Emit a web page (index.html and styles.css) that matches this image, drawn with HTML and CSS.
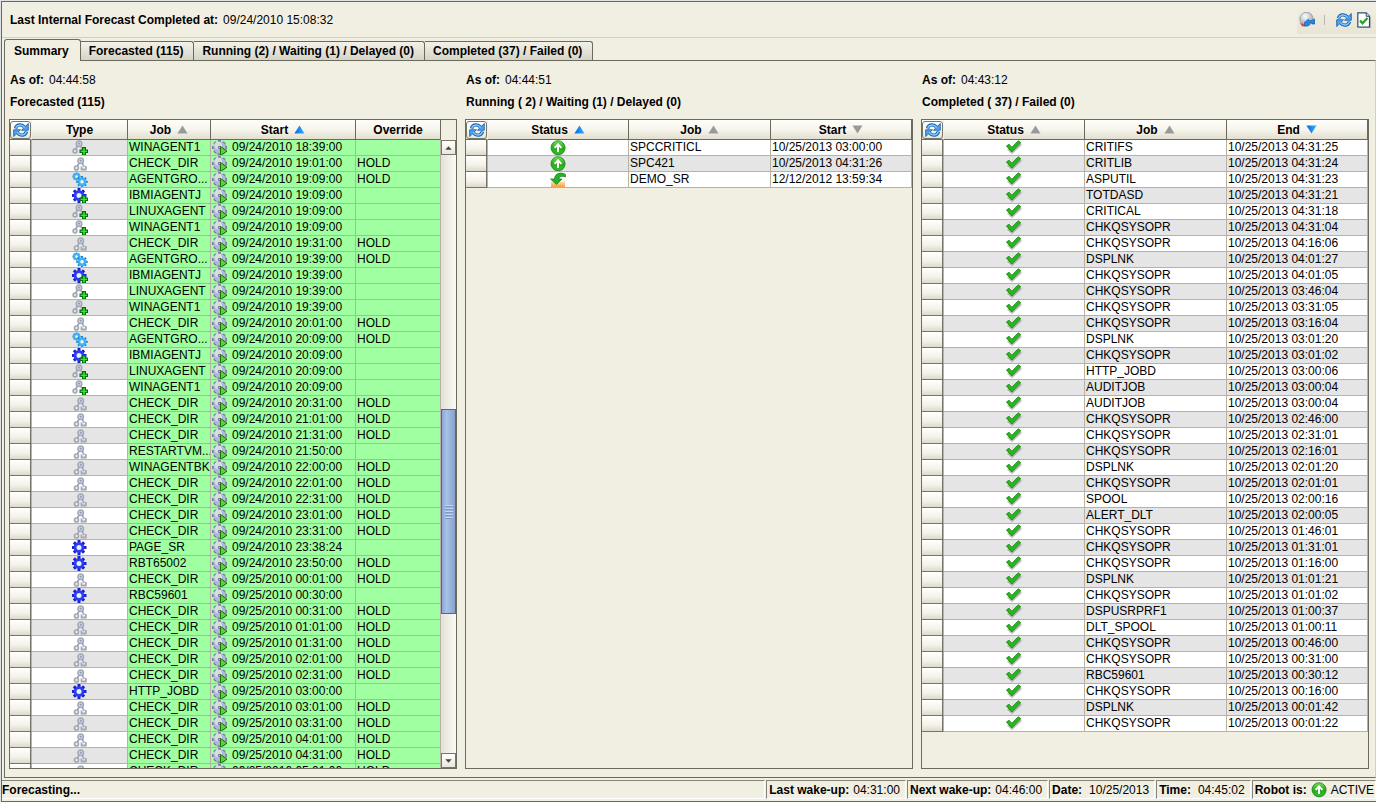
FILE: index.html
```html
<!DOCTYPE html>
<html lang="en">
<head>
<meta charset="utf-8">
<title>Schedule Activity Monitor</title>
<link rel="stylesheet" href="styles.css">
</head>
<body>
<svg class="sprite" aria-hidden="true">
  <defs>
    <linearGradient id="gr-ball" x1="0" y1="0" x2="0" y2="1"><stop offset="0" stop-color="#7be05a"/><stop offset=".5" stop-color="#27a81c"/><stop offset="1" stop-color="#35c32a"/></linearGradient>
    <linearGradient id="gr-tri" x1="0" y1="0" x2="1" y2="0"><stop offset="0" stop-color="#0a62d8"/><stop offset="1" stop-color="#35b6ff"/></linearGradient>
    <linearGradient id="gr-tray" x1="0" y1="0" x2="0" y2="1"><stop offset="0" stop-color="#ffe0a8"/><stop offset="1" stop-color="#ff9d3c"/></linearGradient>
    <radialGradient id="gr-globe" cx=".4" cy=".3" r=".8"><stop offset="0" stop-color="#fff"/><stop offset="1" stop-color="#8d9195"/></radialGradient>
  </defs>
  <symbol id="agent" viewBox="0 0 16 16">
    <g fill="none" stroke="#a3a8b4"><path d="M7.500 6.500L5 10.500M10 6.500l2 4.500" stroke-width="1.800"/><circle cx="8.700" cy="4.700" r="2.700" fill="#dfe4ee" stroke-width="1.700"/><circle cx="4.500" cy="12" r="2" fill="#eef0f4" stroke-width="1.700"/><path d="M9.500 10.500V13.500h4.300v-3.500" stroke-width="1.800"/></g>
    <circle cx="8.700" cy="4.700" r="1.100" fill="#7f9cc8"/>
  </symbol>
  <symbol id="plus" viewBox="0 0 16 16"><path d="M10 7h4v2.500h2v3.500h-2v2.500h-4v-2.500H7.500v-3.500H10z" fill="#0b6c10"/><path d="M11.200 8.200h1.600v2.500H15v1.200h-2.200v2.500h-1.600v-2.500H8.700v-1.200h2.500z" fill="#27f02b"/></symbol>
  <symbol id="agent-plus" viewBox="0 0 16 16">
    <g fill="none" stroke="#a3a8b4"><path d="M5.500 6L3 10M8.500 6l2 3" stroke-width="1.800"/><circle cx="7" cy="3.700" r="2.700" fill="#dfe4ee" stroke-width="1.700"/><circle cx="3" cy="11" r="1.900" fill="#eef0f4" stroke-width="1.700"/></g>
    <circle cx="7" cy="3.700" r="1.100" fill="#7f9cc8"/><use href="#plus"/>
  </symbol>
  <symbol id="gear" viewBox="0 0 16 16">
    <g fill="none" stroke="#1b23c9" stroke-width="3"><path d="M7 0v15M-.5 7.500h15M1.900 2.400l10.200 10.200M12.100 2.400L1.900 12.600"/></g>
    <circle cx="7" cy="7.500" r="5.300" fill="#2a3ff2"/><circle cx="7" cy="7.500" r="2.500" fill="#eceefa"/>
  </symbol>
  <symbol id="gear-plus" viewBox="0 0 16 16"><use href="#gear"/><use href="#plus"/></symbol>
  <symbol id="group" viewBox="0 0 16 16">
    <g fill="none" stroke="#1787cf" stroke-width="1.800"><path d="M4.500 .5v8M.5 4.500h8M1.700 1.700l5.600 5.600M7.300 1.700L1.700 7.300"/></g>
    <circle cx="4.500" cy="4.500" r="3.200" fill="#40b1f4"/><circle cx="4.500" cy="4.500" r="1.200" fill="#fff"/>
    <g fill="none" stroke="#1787cf" stroke-width="2.200"><path d="M10 4v11.500M4.300 9.800h11.400M6 5.800l8 8M14 5.800l-8 8"/></g>
    <circle cx="10" cy="9.800" r="4.400" fill="#40b1f4"/><circle cx="10" cy="9.800" r="1.700" fill="#fff"/>
  </symbol>
  <symbol id="run" viewBox="0 0 16 16">
    <circle cx="8.300" cy="8.500" r="6.800" fill="#555" opacity=".35"/>
    <g fill="none" stroke="#7c7f9c" stroke-width="3"><path d="M7.500 0v15M0 7.500h15M2.300 2.300l10.400 10.400M12.700 2.300L2.300 12.700"/></g>
    <circle cx="7.500" cy="7.500" r="6" fill="#b4b6d6"/><circle cx="6.300" cy="5.500" r="3.800" fill="#d9dbf0"/><circle cx="7.500" cy="7.500" r="1.700" fill="#6a6e88"/><circle cx="7.500" cy="7.500" r=".8" fill="#a0ffa0"/>
    <path d="M8.500 6.500l6.500 4.700-6.500 4.300z" fill="#5fd03f" stroke="#14710f" stroke-width="1"/>
  </symbol>
  <symbol id="up" viewBox="0 0 16 16">
    <circle cx="8.500" cy="8.500" r="7" fill="#888" opacity=".5"/><circle cx="8" cy="7.700" r="7" fill="url(#gr-ball)" stroke="#168512" stroke-width=".8"/>
    <path d="M8 3l4.200 4.300-1.400 1.200L9 6.800V12H7V6.800L5.200 8.500 3.800 7.300z" fill="#fff"/>
  </symbol>
  <symbol id="wait" viewBox="0 0 16 16">
    <path d="M1 9.500h14V15H1z" fill="url(#gr-tray)"/>
    <path d="M15.500 2.500V5C12 3.500 9 4.500 9 7h3l-5.500 5.500L.5 7h4C4.500 1.500 11 -.5 15.500 2.500z" fill="#27b12c" stroke="#128018" stroke-width=".7"/>
  </symbol>
  <symbol id="check" viewBox="0 0 16 16">
    <path d="M2 8.500L6 12.500 15 4" fill="none" stroke="#777" stroke-width="2.500" opacity=".5"/>
    <path d="M.4 6L3 4.200l2.800 3L12.300 .8l2.400 1.900L5.800 12z" fill="#2bb51f" stroke="#14850f" stroke-width=".8"/>
  </symbol>
  <symbol id="sync" viewBox="0 0 16 16">
    <g fill="none" stroke="#1d66b4" stroke-width="3.400"><path d="M2.500 6.500C3.500 2.500 8.500 1.500 11.500 5"/><path d="M13.500 9.500c-1 4-6 5-9 1.500"/></g>
    <path d="M15.300 1.500v6.700H8.500z" fill="#4ba2f2" stroke="#1d66b4" stroke-width=".9"/><path d="M.7 14.500V7.800h6.800z" fill="#4ba2f2" stroke="#1d66b4" stroke-width=".9"/>
    <g fill="none" stroke="#84c3fa" stroke-width="1.600"><path d="M2.700 6C4 2.700 8.500 1.700 11.800 5.500"/><path d="M13.300 10c-1.300 3.300-5.800 4.300-9.100 .5"/></g>
  </symbol>
  <symbol id="globe" viewBox="0 0 16 16">
    <circle cx="7.500" cy="7" r="6.700" fill="url(#gr-globe)" stroke="#8d8f92" stroke-width=".7"/><path d="M.7 11l3.800 1 2 1.500-3 1.300z" fill="#f24a1b"/>
    <path d="M6.500 9.500l3-2.300v1.300h3L16 7v5h-3v-1.200h-2.500l-1 3-4 .5v-4z" fill="#2687e8" stroke="#0d55ae" stroke-width=".6"/>
  </symbol>
  <symbol id="doc" viewBox="0 0 16 16"><path d="M2.700 2h9l3 3.200V16h-12z" fill="#777" opacity=".6"/><path d="M1.800 .8h8.400L13.500 4.300v10.700H1.800z" fill="#fff" stroke="#2c4d78" stroke-width="1.200"/><path d="M10.200 .8v3.500h3.300" fill="#d5e3f1" stroke="#2c4d78"/><path d="M4 8.500l2.500 2.800L11.500 6" fill="none" stroke="#27a31f" stroke-width="2.300"/></symbol>
  <symbol id="tri-up" viewBox="0 0 12 10" preserveAspectRatio="none"><path d="M6 .5L11.500 9.500H.5z"/></symbol>
  <symbol id="tri-down" viewBox="0 0 12 10" preserveAspectRatio="none"><path d="M6 9.500L.5 .5h11z"/></symbol>
</svg>

<div class="app">
  <header class="toolbar">
    <p class="stamp"><b>Last Internal Forecast Completed at:</b><span>09/24/2010 15:08:32</span></p>
    <div class="tools">
      <button class="tool" aria-label="Remote refresh"><svg class="icon"><use href="#globe"/></svg></button>
      <span class="tool-sep"></span>
      <button class="tool" aria-label="Refresh"><svg class="icon"><use href="#sync"/></svg></button>
      <button class="tool" aria-label="Properties"><svg class="icon"><use href="#doc"/></svg></button>
    </div>
  </header>

  <nav class="tabs" role="tablist">
    <button class="tab tab-active" role="tab" aria-selected="true">Summary</button>
    <button class="tab" role="tab">Forecasted (115)</button>
    <button class="tab" role="tab">Running (2) / Waiting (1) / Delayed (0)</button>
    <button class="tab" role="tab">Completed (37) / Failed (0)</button>
  </nav>

  <main class="pane">
    <section class="panel">
      <p class="stamp"><b>As of:</b><span>04:44:58</span></p>
      <h2 class="title">Forecasted (115)</h2>
      <div class="box">
        <table class="grid grid-forecast">
          <colgroup><col class="c-handle"><col class="c-type"><col class="c-name"><col class="c-when"><col class="c-over"></colgroup>
          <thead><tr>
            <th class="corner"><button class="reload" aria-label="Refresh forecasted"><svg class="icon"><use href="#sync"/></svg></button></th>
            <th>Type</th>
            <th>Job<svg class="sort"><use href="#tri-up"/></svg></th>
            <th>Start<svg class="sort sort-on"><use href="#tri-up"/></svg></th>
            <th>Override</th>
          </tr></thead>
          <tbody id="forecast"></tbody>
        </table>
        <div class="scroll">
          <div class="scroll-head"></div>
          <button class="scroll-btn" aria-label="Scroll up"><svg class="arrow"><use href="#tri-up"/></svg></button>
          <div class="track"><div class="track-before"></div><div class="thumb"><span class="grip"></span></div><div class="track-after"></div></div>
          <button class="scroll-btn" aria-label="Scroll down"><svg class="arrow"><use href="#tri-down"/></svg></button>
        </div>
      </div>
    </section>

    <section class="panel">
      <p class="stamp"><b>As of:</b><span>04:44:51</span></p>
      <h2 class="title">Running ( 2) / Waiting (1) / Delayed (0)</h2>
      <div class="box">
        <table class="grid">
          <colgroup><col class="c-handle"><col class="c-third"><col class="c-job"><col class="c-third"></colgroup>
          <thead><tr>
            <th class="corner"><button class="reload" aria-label="Refresh running"><svg class="icon"><use href="#sync"/></svg></button></th>
            <th>Status<svg class="sort sort-on"><use href="#tri-up"/></svg></th>
            <th>Job<svg class="sort"><use href="#tri-up"/></svg></th>
            <th>Start<svg class="sort"><use href="#tri-down"/></svg></th>
          </tr></thead>
          <tbody id="running"></tbody>
        </table>
      </div>
    </section>

    <section class="panel">
      <p class="stamp"><b>As of:</b><span>04:43:12</span></p>
      <h2 class="title">Completed ( 37) / Failed (0)</h2>
      <div class="box">
        <table class="grid">
          <colgroup><col class="c-handle"><col class="c-third"><col class="c-job"><col class="c-third"></colgroup>
          <thead><tr>
            <th class="corner"><button class="reload" aria-label="Refresh completed"><svg class="icon"><use href="#sync"/></svg></button></th>
            <th>Status<svg class="sort"><use href="#tri-up"/></svg></th>
            <th>Job<svg class="sort"><use href="#tri-up"/></svg></th>
            <th>End<svg class="sort sort-on"><use href="#tri-down"/></svg></th>
          </tr></thead>
          <tbody id="completed"></tbody>
        </table>
      </div>
    </section>
  </main>

  <footer class="status">
    <div class="cell cell-message"><b>Forecasting...</b></div>
    <div class="cell"><b>Last wake-up:</b><span>04:31:00</span></div>
    <div class="cell"><b>Next wake-up:</b><span>04:46:00</span></div>
    <div class="cell cell-wide"><b>Date:</b><span>10/25/2013</span></div>
    <div class="cell cell-wide"><b>Time:</b><span>04:45:02</span></div>
    <div class="cell cell-robot"><b>Robot is:</b><svg class="icon"><use href="#up"/></svg><span>ACTIVE</span></div>
  </footer>
</div>
<script src="script.js"></script>
</body>
</html>
```

FILE: styles.css
```css
* { box-sizing: border-box; }

body {
  margin: 0;
  padding: 1px 0 0 1px;
  height: 100vh;
  overflow: hidden;
  background: #dfe3e6;
  color: #000;
  font: 12px/15px "Liberation Sans", Arial, sans-serif;
}

button {
  margin: 0;
  padding: 0;
  border: 0;
  background: none;
  color: inherit;
  font: inherit;
}

.sprite { position: absolute; width: 0; height: 0; }
.icon { display: block; width: 16px; height: 16px; flex: none; overflow: visible; }

.app {
  display: flex;
  flex-direction: column;
  height: 100%;
  border: 1px solid #686860;
  border-right: 0;
  background: #f1eee2;
}

/* Top bar */
.toolbar {
  display: flex;
  justify-content: space-between;
  align-items: center;
  height: 36px;
  padding-left: 8px;
  border-bottom: 1px solid #d2d0c3;
}
.stamp { display: flex; gap: 5px; margin: 0; white-space: nowrap; }
.toolbar .stamp { padding-top: 2px; }
.tools {
  display: flex;
  align-items: center;
  gap: 4px;
  height: 28px;
  padding: 0 4px 0 2px;
  background: linear-gradient(#f1eee2, #e8e5d6);
}
.tool-sep { width: 1px; height: 10px; margin: 0 7px 0 5px; background: #b9b7ab; }

/* Tabs */
.tabs { display: flex; align-items: flex-end; height: 22px; padding-left: 2px; }
.tab {
  height: 19px;
  padding: 1px 10px 0 8px;
  border: 1px solid #6b6a5e;
  border-left: 0;
  border-bottom: 0;
  border-radius: 0 3px 0 0;
  background: linear-gradient(#f4f2e8, #d6d4c6);
  font-weight: bold;
  white-space: nowrap;
}
.tab-active {
  position: relative;
  height: 22px;
  margin-bottom: -1px;
  padding: 1px 11px 0 9px;
  border-left: 1px solid #6b6a5e;
  border-radius: 3px 3px 0 0;
  background: #f1eee2;
}

/* Summary pane */
.pane {
  flex: 1;
  min-height: 0;
  display: grid;
  grid-template-columns: repeat(3, minmax(0, 1fr));
  gap: 8px;
  margin-left: 2px;
  padding: 12px 6px 8px 4px;
  border: 1px solid #6b6a5e;
  border-right-color: #d2d0c3;
}
.panel { display: flex; flex-direction: column; min-height: 0; }
.panel .stamp { padding-left: 1px; }
.title { margin: 7px 0 9px 1px; font: inherit; font-weight: bold; }
.box {
  flex: 1;
  display: flex;
  align-items: flex-start;
  min-height: 0;
  overflow: hidden;
  border: 1px solid #6b6a5e;
}

.grid { flex: 1; width: 100%; table-layout: fixed; border-spacing: 0; }
.c-handle { width: 22px; }
.c-type { width: 96px; }
.c-name { width: 83px; }
.c-when { width: 145px; }
.c-over { width: 85px; }
.c-third { width: 141px; }
.c-job { width: 142px; }

.grid th {
  height: 20px;
  padding: 2px 0 0;
  border-right: 1px solid #6b6a5e;
  border-bottom: 1px solid #6b6a5e;
  background: linear-gradient(#fefefb, #f7f5ec 50%, #e2dfd0);
  line-height: 17px;
}
.grid th.corner { padding: 0; border-right-color: #f1eee2; }
.reload {
  display: flex;
  align-items: center;
  justify-content: center;
  width: 21px;
  height: 18px;
  border: 1px solid #77766a;
  border-radius: 3px;
  background: linear-gradient(#fff, #e9e7da);
}
.sort { width: 11px; height: 9px; margin-left: 6px; fill: #999; }
.sort-on { fill: url(#gr-tri); }

.grid td {
  height: 16px;
  padding: 0 0 0 1px;
  border-right: 1px solid #b5b2a7;
  border-bottom: 1px solid #b5b2a7;
  background: #fff;
  line-height: 15px;
  white-space: nowrap;
  overflow: hidden;
}
.grid tr:nth-child(even) td { background: #e5e5e5; }
.grid-forecast tr:nth-child(odd) td { background: #e5e5e5; }
.grid-forecast tr:nth-child(even) td { background: #fff; }
.grid-forecast tr td.hot { background: #a0ffa0; }
.grid tr td.handle {
  border-bottom-color: #77766a;
  background: linear-gradient(#fffffc, #f4f2e9 60%, #dcd9cc);
  box-shadow: inset -1px 0 #77766a;
}
.grid td .icon { margin-bottom: -1px; }
.grid .mark { padding: 0; }
.mark .icon { margin-left: auto; margin-right: auto; }
.when { display: flex; gap: 4px; height: 15px; }

/* Scroll bar */
.scroll { display: flex; flex-direction: column; align-self: stretch; width: 15px; }
.scroll-head { height: 20px; }
.scroll-btn {
  display: flex;
  align-items: center;
  justify-content: center;
  height: 15px;
  border: 1px solid #77766a;
  background: linear-gradient(#fff, #e9e7da);
}
.arrow { width: 7px; height: 4px; fill: #444; }
.track { flex: 1; display: flex; flex-direction: column; background: linear-gradient(90deg, #e4e1d6, #fbfaf5); }
.track-before { flex: 255; }
.thumb {
  flex: 204;
  display: flex;
  align-items: center;
  justify-content: center;
  border: 1px solid #52688c;
  background: linear-gradient(90deg, #88a6d6, #a9c1e6 35%, #86a2cd);
}
.track-after { flex: 139; }
.grip { width: 8px; height: 14px; background: repeating-linear-gradient(#c4d5ef 0 1px, #7f99c2 1px 2px, #9bb4db 2px 3px); }

/* Status bar */
.status { display: flex; gap: 1px; height: 23px; padding: 2px 0; }
.cell {
  display: flex;
  align-items: center;
  gap: 4px;
  padding: 1px 5px 0 2px;
  border: 1px solid #85847a;
  border-right-color: #fff;
  border-bottom-color: #fff;
  white-space: nowrap;
}
.cell-message { flex: 1; padding-left: 0; border-left: 0; }
.cell-wide { gap: 7px; }
.cell-robot { padding-right: 1px; }
```

FILE: script.js
```js
const forecast = [
  ["agent-plus", "WINAGENT1", "09/24/2010 18:39:00", ""],
  ["agent", "CHECK_DIR", "09/24/2010 19:01:00", "HOLD"],
  ["group", "AGENTGRO...", "09/24/2010 19:09:00", "HOLD"],
  ["gear-plus", "IBMIAGENTJ", "09/24/2010 19:09:00", ""],
  ["agent-plus", "LINUXAGENT", "09/24/2010 19:09:00", ""],
  ["agent-plus", "WINAGENT1", "09/24/2010 19:09:00", ""],
  ["agent", "CHECK_DIR", "09/24/2010 19:31:00", "HOLD"],
  ["group", "AGENTGRO...", "09/24/2010 19:39:00", "HOLD"],
  ["gear-plus", "IBMIAGENTJ", "09/24/2010 19:39:00", ""],
  ["agent-plus", "LINUXAGENT", "09/24/2010 19:39:00", ""],
  ["agent-plus", "WINAGENT1", "09/24/2010 19:39:00", ""],
  ["agent", "CHECK_DIR", "09/24/2010 20:01:00", "HOLD"],
  ["group", "AGENTGRO...", "09/24/2010 20:09:00", "HOLD"],
  ["gear-plus", "IBMIAGENTJ", "09/24/2010 20:09:00", ""],
  ["agent-plus", "LINUXAGENT", "09/24/2010 20:09:00", ""],
  ["agent-plus", "WINAGENT1", "09/24/2010 20:09:00", ""],
  ["agent", "CHECK_DIR", "09/24/2010 20:31:00", "HOLD"],
  ["agent", "CHECK_DIR", "09/24/2010 21:01:00", "HOLD"],
  ["agent", "CHECK_DIR", "09/24/2010 21:31:00", "HOLD"],
  ["agent", "RESTARTVM...", "09/24/2010 21:50:00", ""],
  ["agent", "WINAGENTBK", "09/24/2010 22:00:00", "HOLD"],
  ["agent", "CHECK_DIR", "09/24/2010 22:01:00", "HOLD"],
  ["agent", "CHECK_DIR", "09/24/2010 22:31:00", "HOLD"],
  ["agent", "CHECK_DIR", "09/24/2010 23:01:00", "HOLD"],
  ["agent", "CHECK_DIR", "09/24/2010 23:31:00", "HOLD"],
  ["gear", "PAGE_SR", "09/24/2010 23:38:24", ""],
  ["gear", "RBT65002", "09/24/2010 23:50:00", "HOLD"],
  ["agent", "CHECK_DIR", "09/25/2010 00:01:00", "HOLD"],
  ["gear", "RBC59601", "09/25/2010 00:30:00", ""],
  ["agent", "CHECK_DIR", "09/25/2010 00:31:00", "HOLD"],
  ["agent", "CHECK_DIR", "09/25/2010 01:01:00", "HOLD"],
  ["agent", "CHECK_DIR", "09/25/2010 01:31:00", "HOLD"],
  ["agent", "CHECK_DIR", "09/25/2010 02:01:00", "HOLD"],
  ["agent", "CHECK_DIR", "09/25/2010 02:31:00", "HOLD"],
  ["gear", "HTTP_JOBD", "09/25/2010 03:00:00", ""],
  ["agent", "CHECK_DIR", "09/25/2010 03:01:00", "HOLD"],
  ["agent", "CHECK_DIR", "09/25/2010 03:31:00", "HOLD"],
  ["agent", "CHECK_DIR", "09/25/2010 04:01:00", "HOLD"],
  ["agent", "CHECK_DIR", "09/25/2010 04:31:00", "HOLD"],
  ["agent", "CHECK_DIR", "09/25/2010 05:01:00", "HOLD"]
];

const running = [
  ["up", "SPCCRITICL", "10/25/2013 03:00:00"],
  ["up", "SPC421", "10/25/2013 04:31:26"],
  ["wait", "DEMO_SR", "12/12/2012 13:59:34"]
];

const completed = [
  ["CRITIFS", "04:31:25"], ["CRITLIB", "04:31:24"], ["ASPUTIL", "04:31:23"],
  ["TOTDASD", "04:31:21"], ["CRITICAL", "04:31:18"], ["CHKQSYSOPR", "04:31:04"],
  ["CHKQSYSOPR", "04:16:06"], ["DSPLNK", "04:01:27"], ["CHKQSYSOPR", "04:01:05"],
  ["CHKQSYSOPR", "03:46:04"], ["CHKQSYSOPR", "03:31:05"], ["CHKQSYSOPR", "03:16:04"],
  ["DSPLNK", "03:01:20"], ["CHKQSYSOPR", "03:01:02"], ["HTTP_JOBD", "03:00:06"],
  ["AUDITJOB", "03:00:04"], ["AUDITJOB", "03:00:04"], ["CHKQSYSOPR", "02:46:00"],
  ["CHKQSYSOPR", "02:31:01"], ["CHKQSYSOPR", "02:16:01"], ["DSPLNK", "02:01:20"],
  ["CHKQSYSOPR", "02:01:01"], ["SPOOL", "02:00:16"], ["ALERT_DLT", "02:00:05"],
  ["CHKQSYSOPR", "01:46:01"], ["CHKQSYSOPR", "01:31:01"], ["CHKQSYSOPR", "01:16:00"],
  ["DSPLNK", "01:01:21"], ["CHKQSYSOPR", "01:01:02"], ["DSPUSRPRF1", "01:00:37"],
  ["DLT_SPOOL", "01:00:11"], ["CHKQSYSOPR", "00:46:00"], ["CHKQSYSOPR", "00:31:00"],
  ["RBC59601", "00:30:12"], ["CHKQSYSOPR", "00:16:00"], ["DSPLNK", "00:01:42"],
  ["CHKQSYSOPR", "00:01:22"]
].map(([job, time]) => ["check", job, "10/25/2013 " + time]);

const icon = id => `<svg class="icon" aria-hidden="true"><use href="#${id}"/></svg>`;
const lead = id => `<td class="handle"></td><td class="mark">${icon(id)}</td>`;

const fill = (id, rows, render) => {
  document.getElementById(id).innerHTML = rows.map(row => `<tr>${render(row)}</tr>`).join("");
};

fill("forecast", forecast, ([kind, job, start, hold]) =>
  lead(kind) + `<td class="hot">${job}</td><td class="hot"><div class="when">${icon("run")}<span>${start}</span></div></td><td class="hot">${hold}</td>`);

const plain = ([kind, job, time]) => lead(kind) + `<td>${job}</td><td>${time}</td>`;
fill("running", running, plain);
fill("completed", completed, plain);
```
